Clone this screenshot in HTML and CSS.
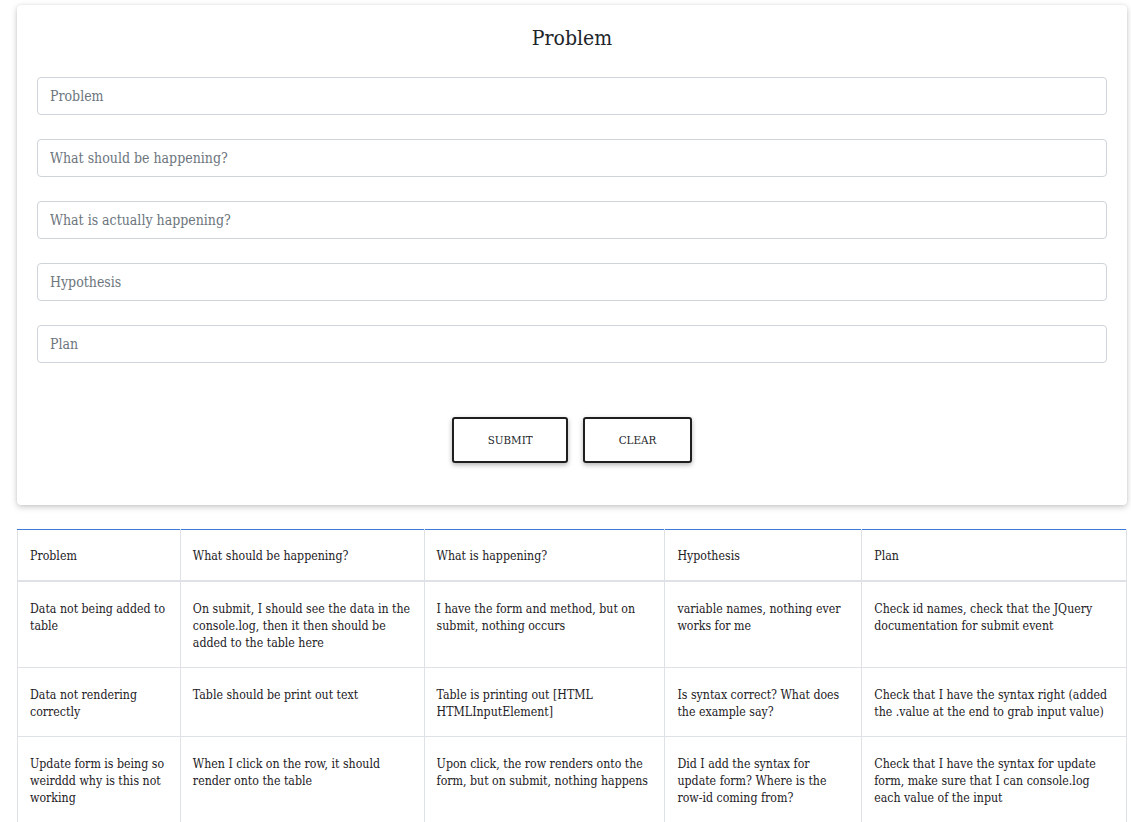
FILE: index.html
```html
<!DOCTYPE html>
<html lang="en">
<head>
<meta charset="utf-8">
<title>Problem</title>
<link rel="stylesheet" href="styles.css">
</head>
<body>
<main class="page">
  <form class="card">
    <h1 class="title">Problem</h1>
    <input class="field" type="text" placeholder="Problem">
    <input class="field" type="text" placeholder="What should be happening?">
    <input class="field" type="text" placeholder="What is actually happening?">
    <input class="field" type="text" placeholder="Hypothesis">
    <input class="field" type="text" placeholder="Plan">
    <div class="actions">
      <button type="button" class="btn">SUBMIT</button>
      <button type="button" class="btn">CLEAR</button>
    </div>
  </form>

  <table class="grid">
    <thead>
      <tr>
        <th class="c1">Problem</th>
        <th class="c2">What should be happening?</th>
        <th class="c3">What is happening?</th>
        <th class="c4">Hypothesis</th>
        <th class="c5">Plan</th>
      </tr>
    </thead>
    <tbody>
      <tr>
        <td>Data not being added to table</td>
        <td>On submit, I should see the data in the console.log, then it then should be added to the table here</td>
        <td>I have the form and method, but on submit, nothing occurs</td>
        <td>variable names, nothing ever works for me</td>
        <td>Check id names, check that the JQuery documentation for submit event</td>
      </tr>
      <tr>
        <td>Data not rendering correctly</td>
        <td>Table should be print out text</td>
        <td>Table is printing out [HTML HTMLInputElement]</td>
        <td>Is syntax correct? What does the example say?</td>
        <td>Check that I have the syntax right (added the .value at the end to grab input value)</td>
      </tr>
      <tr>
        <td>Update form is being so weirddd why is this not working</td>
        <td>When I click on the row, it should render onto the table</td>
        <td>Upon click, the row renders onto the form, but on submit, nothing happens</td>
        <td>Did I add the syntax for update form? Where is the row-id coming from?</td>
        <td>Check that I have the syntax for update form, make sure that I can console.log each value of the input</td>
      </tr>
    </tbody>
  </table>
</main>
</body>
</html>
```

FILE: styles.css
```css
* { box-sizing: border-box; }

html, body {
  margin: 0;
  background: #ffffff;
}

body {
  font-family: "DejaVu Serif Condensed", "DejaVu Serif", "Liberation Serif", serif;
  font-stretch: condensed;
  color: #212529;
}

.page {
  padding: 5px 4px 0 17px;
}

.card {
  display: flex;
  flex-direction: column;
  gap: 24px;
  background: #fff;
  border-radius: 4px;
  box-shadow: 0 2px 6px rgba(0, 0, 0, 0.22), 0 0 2px rgba(0, 0, 0, 0.08);
  padding: 19px 20px 42px 20px;
}

.title {
  margin: 0 0 1px 0;
  text-align: center;
  font-size: 21px;
  font-weight: normal;
  line-height: 28px;
  color: #212529;
}

.field {
  display: block;
  flex-shrink: 0;
  width: 100%;
  height: 38px;
  padding: 0 12px;
  border: 1px solid #ced4da;
  border-radius: 4px;
  font-family: inherit;
  font-stretch: condensed;
  font-size: 14px;
  color: #495057;
  background: #fff;
}

.field::placeholder {
  color: #6c757d;
  opacity: 1;
}

.actions {
  margin-top: 30px;
  display: flex;
  justify-content: center;
  gap: 15px;
}

.btn {
  height: 46px;
  padding: 0 33.5px;
  background: #fff;
  border: 2px solid #1f1f1f;
  border-radius: 3px;
  box-shadow: 0 2px 5px rgba(0, 0, 0, 0.3);
  font-family: inherit;
  font-stretch: condensed;
  font-size: 11.5px;
  color: #212529;
}

.grid {
  margin-top: 24px;
  width: 100%;
  border-collapse: collapse;
  font-size: 12.25px;
  line-height: 17px;
  color: #1d2125;
}

.grid th,
.grid td {
  text-align: left;
  vertical-align: top;
  font-weight: normal;
  padding: 19px 12px 15px 12px;
  border: 1px solid #dee2e6;
}

.grid thead th {
  border-top: 1px solid #3f7bd9;
  border-bottom: 2px solid #dee2e6;
  padding-top: 18px;
  padding-bottom: 15px;
}

.c1 { width: 163px; }
.c2 { width: 244px; }
.c3 { width: 241px; }
.c4 { width: 197px; }
.c5 { width: 265px; }
```
